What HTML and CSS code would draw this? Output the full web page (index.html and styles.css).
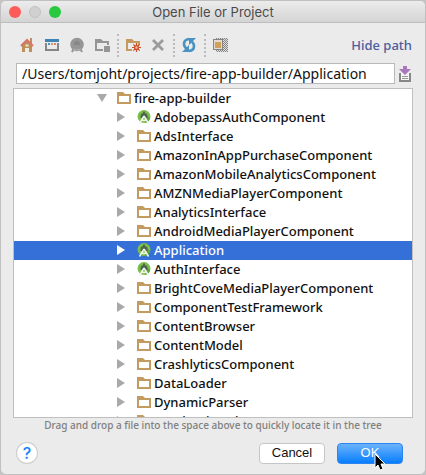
FILE: index.html
```html
<!DOCTYPE html>
<html lang="en">
<head>
<meta charset="utf-8">
<title>Open File or Project</title>
<link rel="stylesheet" href="styles.css">
</head>
<body>
<svg class="defs" aria-hidden="true">
  <symbol id="folder" viewBox="0 0 14 12"><path fill="#c39a60" fill-rule="evenodd" d="M0 0h6l2 2h6v10H0zM2 4v6h10V4z"/></symbol>
  <symbol id="studio" viewBox="0 0 14 14"><circle cx="7" cy="6.500" r="6.500" fill="#7ac04a"/><path d="M8 4l5.200 4a6.500 6.500 0 0 1-4.700 4.800z" fill="#5fa238"/><path d="M3.500 8V6a3.500 3 0 0 1 7 0v2z" fill="#50664c"/><path d="M7 1.500v3" stroke="#50664c" stroke-width="2"/><path d="M7 6 2.500 13.500M7 6l4.500 7.500M4 9.500q3 1.800 6 0" fill="none" stroke="#eef4ea" stroke-width="1.500"/></symbol>
  <symbol id="right" viewBox="0 0 8 10"><path fill="currentColor" d="M0 0l8 5-8 5z"/></symbol>
  <symbol id="down" viewBox="0 0 10 8"><path fill="currentColor" d="M0 0h10L5 8z"/></symbol>
</svg>
<main class="window">
  <header class="titlebar">
    <span class="lights">
      <button class="light close" aria-label="Close"></button>
      <button class="light minimize" aria-label="Minimize"></button>
      <button class="light zoom" aria-label="Zoom"></button>
    </span>
    <h1>Open File or Project</h1>
  </header>
  <nav class="toolbar">
    <button aria-label="Home"><svg viewBox="0 0 16 16"><path fill="#bd9058" d="M3 7l5-4 5 4v8h-3v-4H6v4H3z"/><path fill="#bd9058" d="M11 1h2v5h-2z"/><path d="M2 9l6-6 6 6" fill="none" stroke="#d8736c" stroke-width="2"/><path fill="#f0e5d5" d="M6.500 7.500h3v2h-3z"/></svg></button>
    <button aria-label="Desktop"><svg viewBox="0 0 16 16"><path fill="#3d84b5" d="M1 2h14v3H1z"/><path d="M2 6v7h12V6" fill="none" stroke="#858585" stroke-width="2"/><path fill="#4b95c7" d="M4 6h2v2H4z"/><path fill="#cb9f60" d="M7 6h2v2H7z"/><path fill="#db8275" d="M10 6h2v2h-2z"/></svg></button>
    <button aria-label="Project folder"><svg viewBox="0 0 16 16"><circle cx="8" cy="7.500" r="6.800" fill="#969696"/><path d="M5 11l-2 4M11 11l2 4" stroke="#969696" stroke-width="2"/><path d="M5 8a3 4 0 0 1 6 0z" fill="#878787"/><path d="M4 12q4 2 8 0" fill="none" stroke="#b3b3b3"/></svg></button>
    <button aria-label="Module folder"><svg viewBox="0 0 16 16"><path fill="#959595" fill-rule="evenodd" d="M1 2h6l2 2h6v4h-2V6H3v6h6v2H1z"/><path fill="#959595" d="M10 9h6v6h-6z"/></svg></button>
    <span class="separator"></span>
    <button aria-label="New folder"><svg viewBox="0 0 16 16"><path fill="#c39a60" fill-rule="evenodd" d="M1 2h6l2 2h6v4h-2V6H3v6h4v2H1z"/><path d="M11.500 6v9M7 10.500h9M8.300 7.300l6.400 6.400M14.700 7.300l-6.400 6.400" stroke="#cf5030" stroke-width="1.200"/><circle cx="11.500" cy="10.500" r="2.600" fill="#cf5030"/><circle cx="11.500" cy="10.500" r="1.200" fill="#f2bf91"/></svg></button>
    <button aria-label="Delete"><svg viewBox="0 0 16 16"><path d="M3 3l10 10M13 3L3 13" stroke="#9b9b9b" stroke-width="2.800"/></svg></button>
    <span class="separator"></span>
    <button aria-label="Refresh"><svg viewBox="0 0 16 16"><path d="M8 2Q3 2.500 3 7q0 3 3 5M8 14q5-.5 5-5 0-3-3-5" fill="none" stroke="#4992c2" stroke-width="2.600"/><path fill="#4992c2" d="M1 15h7V8zM15 1H8v7z"/></svg></button>
    <span class="separator"></span>
    <button aria-label="Show hidden files"><svg viewBox="0 0 16 16" shape-rendering="crispEdges"><path fill="#dedede" d="M4 1h12v14H4z"/><path d="M4 1.500h12M4 3.500h12M4 5.500h12M4 7.500h12M4 9.500h12M4 11.500h12M4 13.500h12" stroke="#858585" stroke-dasharray="1 1"/><path d="M5 2.500h11M5 4.500h11M5 6.500h11M5 8.500h11M5 10.500h11M5 12.500h11M5 14.500h11" stroke="#858585" stroke-dasharray="1 1"/><path fill="#858585" d="M1 2h10v11H1z"/><path fill="#e4dccf" d="M2 3h8v9H2z"/><path fill="#d1a15b" d="M3 5h6v6H3z"/></svg></button>
    <a class="hide-path" href="#path">Hide path</a>
  </nav>
  <div class="path-row">
    <input id="path" aria-label="Path" value="/Users/tomjoht/projects/fire-app-builder/Application">
    <button class="history" aria-label="Recent paths"><svg viewBox="0 0 12 16"><path d="M1 7v8h10V7" fill="none" stroke="#878787" stroke-width="2"/><path fill="#f4f4f4" d="M2 7h8v7H2z"/><path d="M3 10.500h6M3 12.500h6" stroke="#999"/><path fill="#a978bd" d="M4 0h4v3h4L6 9 0 3h4z"/></svg></button>
  </div>
  <ul class="tree">
    <li class="root"><svg class="arrow open"><use href="#down"/></svg><svg class="folder"><use href="#folder"/></svg>fire-app-builder</li>
    <li><svg class="arrow"><use href="#right"/></svg><svg class="studio"><use href="#studio"/></svg>AdobepassAuthComponent</li>
    <li><svg class="arrow"><use href="#right"/></svg><svg class="folder"><use href="#folder"/></svg>AdsInterface</li>
    <li><svg class="arrow"><use href="#right"/></svg><svg class="folder"><use href="#folder"/></svg>AmazonInAppPurchaseComponent</li>
    <li><svg class="arrow"><use href="#right"/></svg><svg class="folder"><use href="#folder"/></svg>AmazonMobileAnalyticsComponent</li>
    <li><svg class="arrow"><use href="#right"/></svg><svg class="folder"><use href="#folder"/></svg>AMZNMediaPlayerComponent</li>
    <li><svg class="arrow"><use href="#right"/></svg><svg class="folder"><use href="#folder"/></svg>AnalyticsInterface</li>
    <li><svg class="arrow"><use href="#right"/></svg><svg class="folder"><use href="#folder"/></svg>AndroidMediaPlayerComponent</li>
    <li class="selected"><svg class="arrow"><use href="#right"/></svg><svg class="studio"><use href="#studio"/></svg>Application</li>
    <li><svg class="arrow"><use href="#right"/></svg><svg class="studio"><use href="#studio"/></svg>AuthInterface</li>
    <li><svg class="arrow"><use href="#right"/></svg><svg class="folder"><use href="#folder"/></svg>BrightCoveMediaPlayerComponent</li>
    <li><svg class="arrow"><use href="#right"/></svg><svg class="folder"><use href="#folder"/></svg>ComponentTestFramework</li>
    <li><svg class="arrow"><use href="#right"/></svg><svg class="folder"><use href="#folder"/></svg>ContentBrowser</li>
    <li><svg class="arrow"><use href="#right"/></svg><svg class="folder"><use href="#folder"/></svg>ContentModel</li>
    <li><svg class="arrow"><use href="#right"/></svg><svg class="folder"><use href="#folder"/></svg>CrashlyticsComponent</li>
    <li><svg class="arrow"><use href="#right"/></svg><svg class="folder"><use href="#folder"/></svg>DataLoader</li>
    <li><svg class="arrow"><use href="#right"/></svg><svg class="folder"><use href="#folder"/></svg>DynamicParser</li>
    <li><svg class="arrow"><use href="#right"/></svg><svg class="folder"><use href="#folder"/></svg>FacebookAuthComponent</li>
  </ul>
  <p class="hint">Drag and drop a file into the space above to quickly locate it in the tree</p>
  <footer class="actions">
    <button class="help" aria-label="Help">?</button>
    <button class="action">Cancel</button>
    <button class="action primary">OK<svg class="cursor" viewBox="0 0 12 18"><path d="M1 1v14l3-3 2 5 3-1-2-5h4z" fill="#000" stroke="#fff"/></svg></button>
  </footer>
</main>
</body>
</html>
```
FILE: styles.css
```css
* { box-sizing: border-box; }
body { margin: 0; background: #c4c4c4; font-family: "Noto Sans", sans-serif; font-size: 13px; font-weight: 500; color: #111; }
button { padding: 0; border: 0; background: none; font: inherit; }
.defs { display: none; }
svg { display: block; flex: none; }
.window { display: flex; flex-direction: column; height: 100vh; border: 1px solid #c0c0c0; border-radius: 6px; background: #ebebeb; overflow: hidden; }
.titlebar { display: grid; grid-template-columns: 1fr auto 1fr; align-items: center; flex: none; height: 22px; padding: 0 8px; background: linear-gradient(#ececec, #d4d4d4); border-bottom: 1px solid #bdbdbd; }
.titlebar h1 { margin: 0; font: 13px Inter, sans-serif; color: #4a4a4a; }
.lights { display: flex; gap: 8px; }
.light { width: 12px; height: 12px; border-radius: 50%; }
.close { background: #fc5b57; }
.minimize { background: #d0d0d0; border: 1px solid #c0c0c0; }
.zoom { background: #28c93f; }
.toolbar { display: flex; align-items: center; gap: 9px; flex: none; height: 40px; padding: 4px 13px 0 18px; }
.toolbar svg { width: 16px; height: 16px; }
.separator { height: 23px; margin: 0 -3px 0 -2px; border-left: 2px dotted #bbb; }
.hide-path { margin-left: auto; font-size: 13px; color: #4c5d9e; text-decoration: none; }
.path-row { display: flex; align-items: center; gap: 4px; flex: none; padding: 0 14px 0 15px; }
.path-row input { flex: 1; min-width: 0; height: 21px; padding: 0 5px; border: 1px solid #b9b9b9; background: #fff; color: #111; font: 14px/18px "Noto Sans", sans-serif; outline: 0; }
.history svg { width: 12px; height: 16px; }
.tree { flex: 1; min-height: 0; margin: 4px 12px 0; padding: 0; border: 1px solid #bfbfbf; background: #fff; overflow: hidden; list-style: none; }
.tree li { display: flex; align-items: center; height: 19px; padding: 0 0 1px 103px; line-height: 18px; white-space: nowrap; }
.tree .root { padding-left: 83px; }
.arrow { width: 8px; height: 10px; margin-right: 12px; color: #a9a9a9; }
.arrow.open { width: 10px; height: 8px; margin-right: 10px; }
.folder { width: 14px; height: 12px; margin-right: 3px; }
.studio { width: 14px; height: 14px; margin-right: 3px; }
.tree .selected { background: #3470d8; color: #fff; }
.selected .arrow { color: #fff; }
.hint { flex: none; margin: 0; font-size: 10px; line-height: 14px; text-align: center; color: #808080; }
.actions { display: flex; align-items: center; gap: 12px; flex: none; height: 42px; padding: 0 22px 0 16px; }
.help { width: 20px; height: 20px; margin-right: auto; border-radius: 50%; background: #fff; box-shadow: 0 0 0 1px #ccc; color: #1683fb; font: 500 16px/20px Inter, sans-serif; }
.action { position: relative; width: 66px; height: 21px; border: 1px solid #c5c5c5; border-radius: 4px; background: #fff; color: #111; font: 500 13px/18px "Liberation Sans", sans-serif; }
.primary { border-color: #2a85f0; background: linear-gradient(#6bb3fa, #087eff); color: #fff; }
.cursor { position: absolute; left: 36px; top: 9px; width: 12px; height: 18px; }
```
